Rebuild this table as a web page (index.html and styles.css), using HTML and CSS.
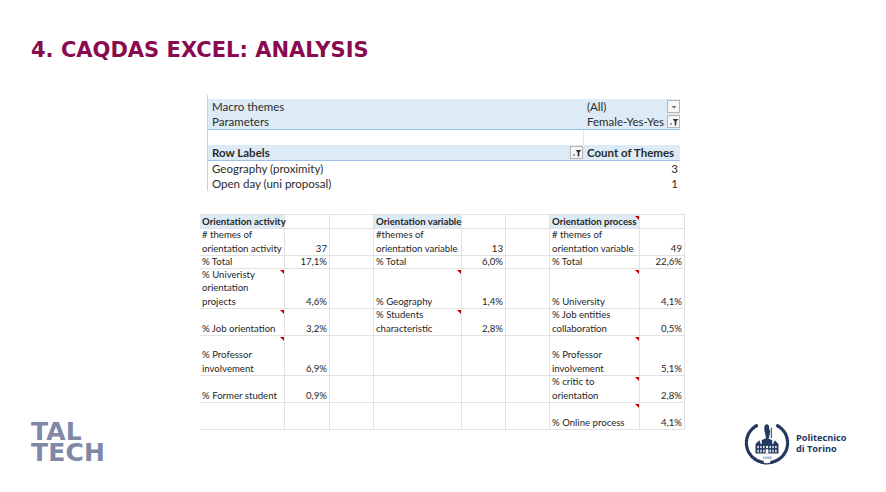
FILE: index.html
```html
<!DOCTYPE html>
<html>
<head>
<meta charset="utf-8">
<link rel="stylesheet" href="styles.css">
</head>
<body>
<div class="slide">
  <h1 class="title">4. CAQDAS EXCEL: ANALYSIS</h1>

  <div class="content">
    <div class="left">
      <div class="taltech"><div>TAL</div><div>TECH</div></div>
    </div>

    <div class="center">
      <div class="pivot">
        <div class="prow band">
          <div class="plabel">Macro themes</div>
          <div class="pval"><span>(All)</span>
            <span class="fbtn"><svg width="10" height="10" viewBox="0 0 10 10"><path d="M2.5 4 L7.5 4 L5 6.5 Z" fill="#707070"/></svg></span>
          </div>
        </div>
        <div class="prow band bline">
          <div class="plabel">Parameters</div>
          <div class="pval"><span>Female-Yes-Yes</span>
            <span class="fbtn"><svg width="10" height="10" viewBox="0 0 10 10"><path d="M0.8 6.5 L3.2 6.5 L2 8 Z" fill="#333"/><path d="M3.6 2 L9.4 2 L7.3 4.6 L7.3 8.6 L5.7 8.6 L5.7 4.6 Z" fill="#333"/></svg></span>
          </div>
        </div>
        <div class="prow">
          <div class="plabel"></div>
          <div class="pval gap"></div>
        </div>
        <div class="prow band bline bold">
          <div class="plabel hdr"><span>Row Labels</span>
            <span class="fbtn"><svg width="10" height="10" viewBox="0 0 10 10"><path d="M0.8 6.5 L3.2 6.5 L2 8 Z" fill="#333"/><path d="M3.6 2 L9.4 2 L7.3 4.6 L7.3 8.6 L5.7 8.6 L5.7 4.6 Z" fill="#333"/></svg></span>
          </div>
          <div class="pval"><span>Count of Themes</span></div>
        </div>
        <div class="prow">
          <div class="plabel">Geography (proximity)</div>
          <div class="pval num">3</div>
        </div>
        <div class="prow">
          <div class="plabel">Open day (uni proposal)</div>
          <div class="pval num">1</div>
        </div>
      </div>

      <div class="sheet">
        <!-- row 1 -->
        <div class="c h">Orientation activity</div><div class="c"></div><div class="c"></div>
        <div class="c h">Orientation variable</div><div class="c"></div><div class="c"></div>
        <div class="c h note">Orientation process</div><div class="c"></div>
        <!-- row 2 -->
        <div class="c"># themes of<br>orientation activity</div><div class="c n">37</div><div class="c"></div>
        <div class="c">#themes of<br>orientation variable</div><div class="c n">13</div><div class="c"></div>
        <div class="c"># themes of<br>orientation variable</div><div class="c n">49</div>
        <!-- row 3 -->
        <div class="c">% Total</div><div class="c n">17,1%</div><div class="c"></div>
        <div class="c">% Total</div><div class="c n">6,0%</div><div class="c"></div>
        <div class="c">% Total</div><div class="c n">22,6%</div>
        <!-- row 4 -->
        <div class="c note">% Univeristy<br>orientation<br>projects</div><div class="c n">4,6%</div><div class="c"></div>
        <div class="c note">% Geography</div><div class="c n">1,4%</div><div class="c"></div>
        <div class="c note">% University</div><div class="c n">4,1%</div>
        <!-- row 5 -->
        <div class="c note">% Job orientation</div><div class="c n">3,2%</div><div class="c"></div>
        <div class="c note">% Students<br>characteristic</div><div class="c n">2,8%</div><div class="c"></div>
        <div class="c">% Job entities<br>collaboration</div><div class="c n">0,5%</div>
        <!-- row 6 -->
        <div class="c note">% Professor<br>involvement</div><div class="c n">6,9%</div><div class="c"></div>
        <div class="c"></div><div class="c"></div><div class="c"></div>
        <div class="c note">% Professor<br>involvement</div><div class="c n">5,1%</div>
        <!-- row 7 -->
        <div class="c">% Former student</div><div class="c n">0,9%</div><div class="c"></div>
        <div class="c"></div><div class="c"></div><div class="c"></div>
        <div class="c note">% critic to<br>orientation</div><div class="c n">2,8%</div>
        <!-- row 8 -->
        <div class="c"></div><div class="c"></div><div class="c"></div>
        <div class="c"></div><div class="c"></div><div class="c"></div>
        <div class="c note">% Online process</div><div class="c n">4,1%</div>
      </div>
    </div>

    <div class="right">
      <div class="polito">
        <svg class="seal" width="46" height="46" viewBox="0 0 48 48">
          <g fill="none" stroke="#24395f" stroke-linecap="round">
            <path d="M13 6 A20.5 20.5 0 0 0 19 44" stroke-width="3.4" stroke-dasharray="2.2 1.5"/>
            <path d="M35 6 A20.5 20.5 0 0 1 29 44" stroke-width="3.4" stroke-dasharray="2.2 1.5"/>
            <path d="M18 44.5 Q24 47 30 44.5" stroke-width="1.4"/>
          </g>
          <g fill="#24395f">
            <path d="M21.5 6 Q24 3 26 6 L26.5 10 Q28 11 27 14 L26 19 L23 19 L22 14 Q20.5 11 21.5 6 Z"/>
            <rect x="28" y="8" width="1" height="11"/>
            <path d="M12 25 L16 21 L17.5 25 L30.5 25 L32 21 L36 25 L36 35 L12 35 Z"/>
            <path d="M18.5 21 L24 18.5 L29.5 21 L29.5 25 L18.5 25 Z"/>
          </g>
          <g fill="#ffffff">
            <rect x="14" y="27" width="1.4" height="2.4"/><rect x="17" y="27" width="1.4" height="2.4"/>
            <rect x="20" y="27" width="1.4" height="2.4"/><rect x="23" y="27" width="2" height="2.4"/>
            <rect x="26.6" y="27" width="1.4" height="2.4"/><rect x="29.6" y="27" width="1.4" height="2.4"/>
            <rect x="32.6" y="27" width="1.4" height="2.4"/>
            <rect x="14" y="31" width="1.4" height="2.8"/><rect x="17" y="31" width="1.4" height="2.8"/>
            <rect x="20" y="31" width="1.4" height="2.8"/><rect x="22.6" y="30.5" width="2.8" height="4.5"/>
            <rect x="26.6" y="31" width="1.4" height="2.8"/><rect x="29.6" y="31" width="1.4" height="2.8"/>
            <rect x="32.6" y="31" width="1.4" height="2.8"/>
          </g>
          <text x="24" y="41" class="year">1859</text>
        </svg>
        <div class="pname"><div>Politecnico</div><div>di Torino</div></div>
      </div>
    </div>
  </div>
</div>
</body>
</html>
```

FILE: styles.css
```css
html, body {
  margin: 0;
  padding: 0;
  background: #ffffff;
}

.slide {
  width: 886px;
  height: 492px;
  overflow: hidden;
}

.title {
  margin: 36px 0 0 31px;
  font-family: "DejaVu Sans", Verdana, sans-serif;
  font-weight: bold;
  font-size: 21px;
  line-height: 28px;
  color: #8a0a4f;
}

.content {
  display: grid;
  grid-template-columns: 200px 485px 1fr;
  margin-top: 31px;
}

.left {
  align-self: end;
  padding: 0 0 4px 31px;
}

.right {
  align-self: end;
  padding: 0 0 1px 59px;
}

.center {
  padding-bottom: 37px;
}

/* pivot table */
.pivot {
  margin-left: 7px;
  width: 472px;
  padding-top: 4px;
  border-left: 1px solid #cfcfcf;
  font-family: Lato, "Open Sans", sans-serif;
  font-size: 11.5px;
  color: #2b2b2b;
}

.prow {
  display: flex;
  height: 15px;
  line-height: 15px;
}

.band {
  background: #ddebf7;
}

.bline {
  border-bottom: 1px solid #9bc2e6;
}

.bold {
  font-weight: bold;
}

.plabel {
  flex: 1;
  padding-left: 4px;
  white-space: nowrap;
}

.plabel.hdr {
  display: flex;
  justify-content: space-between;
  align-items: center;
  padding-right: 1px;
}

.pval {
  width: 93px;
  padding-left: 3px;
  display: flex;
  justify-content: space-between;
  align-items: center;
  white-space: nowrap;
}

.pval.gap {
  border-left: 1px solid #e6e6e6;
}

.pval.num {
  justify-content: flex-end;
  padding-right: 2px;
}

.fbtn {
  width: 11px;
  height: 11px;
  border: 1px solid #b5b5b5;
  background: #f7f7f7;
  display: flex;
  align-items: center;
  justify-content: center;
  flex: none;
}

/* spreadsheet grid */
.sheet {
  margin-top: 23px;
  width: 485px;
  display: grid;
  grid-template-columns: 85px 45px 44px 88px 44px 44px 90px 45px;
  grid-template-rows: 14px 27px 13px 40px 27px 40px 27px 27px;
  border-top: 1px solid #e2e2e2;
  font-family: Lato, "Open Sans", sans-serif;
  font-size: 9.6px;
  line-height: 13.3px;
  color: #262626;
}

.c {
  position: relative;
  border-right: 1px solid #e2e2e2;
  border-bottom: 1px solid #e2e2e2;
  padding: 0 1px 0 2px;
  display: flex;
  align-items: flex-end;
  white-space: nowrap;
}

.c.h {
  background: #ddebf7;
  font-weight: bold;
  align-items: center;
}

.c.n {
  justify-content: flex-end;
  padding-right: 2px;
}

.c.note::after {
  content: "";
  position: absolute;
  top: 1px;
  right: 0;
  width: 0;
  height: 0;
  border-top: 4px solid #c00000;
  border-left: 4px solid transparent;
}

/* logos */
.taltech {
  font-family: "DejaVu Sans", Inter, sans-serif;
  font-weight: bold;
  font-size: 25px;
  letter-spacing: 0.2px;
  color: #7f88a6;
}

.taltech div {
  height: 21px;
  line-height: 21px;
}

.polito {
  display: flex;
  align-items: center;
  gap: 6px;
}

.seal {
  display: block;
}

.year {
  font-family: "DejaVu Sans", sans-serif;
  font-size: 3.6px;
  fill: #24395f;
  text-anchor: middle;
}

.pname {
  font-family: "Open Sans", "Noto Sans", sans-serif;
  font-weight: bold;
  font-size: 9.2px;
  color: #24395f;
  padding-bottom: 1px;
}

.pname div {
  height: 11px;
  line-height: 11px;
}
```
